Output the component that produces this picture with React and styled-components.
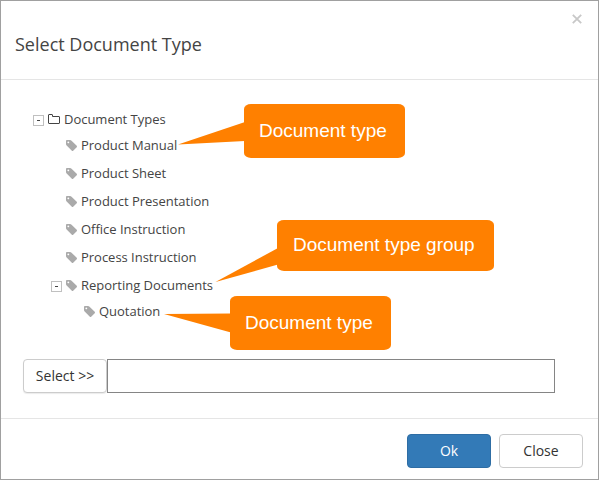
import React from "react";
import styled, { createGlobalStyle } from "styled-components";

const Global = createGlobalStyle`
  body { margin: 0; background: #fff; }
  *, *::before, *::after { box-sizing: border-box; }
`;

const Dialog = styled.section`
  position: relative;
  display: flex;
  flex-direction: column;
  width: 599px;
  height: 480px;
  overflow: hidden;
  border: 1px solid #a0a0a0;
  background: #fff;
  color: #444;
  font-family: "Open Sans", sans-serif;
`;

const Header = styled.header`
  display: flex;
  justify-content: space-between;
  height: 79px;
  flex: none;
  padding: 12px 15px 0 14px;
  border-bottom: 1px solid #e5e5e5;
`;

const Title = styled.h1`
  margin: 18px 0 0;
  font-size: 18px;
  font-weight: 400;
  line-height: 26px;
  white-space: nowrap;
`;

const Dismiss = styled.button`
  display: flex;
  width: 12px;
  height: 12px;
  padding: 1px;
  border: 0;
  background: none;
  color: #c8c8c8;
`;

const Body = styled.main`
  display: flex;
  flex-direction: column;
  justify-content: space-between;
  height: 339px;
  flex: none;
  padding: 25px 22px 25px;
  border-bottom: 1px solid #e5e5e5;
`;

const Tree = styled.ul`
  margin: 0;
  padding: 0 0 0 10px;
  list-style: none;
`;

const Row = styled.li`
  display: flex;
  align-items: center;
  height: ${(p) => p.$height}px;
  padding-left: ${(p) => p.$indent}px;
  font-size: 13px;
  line-height: 18px;
  letter-spacing: -0.02px;
  white-space: nowrap;
`;

const Toggle = styled.span`
  display: flex;
  align-items: center;
  justify-content: center;
  width: 11px;
  height: 11px;
  margin: 2px 4px 0 0;
  border: 1px solid #c0c0c0;
  &::before {
    content: "";
    width: 3px;
    height: 1px;
    background: #444;
  }
`;

const Icon = styled.svg`
  display: block;
  flex: none;
  width: ${(p) => p.$w}px;
  height: ${(p) => p.$h}px;
  margin-right: ${(p) => p.$gap || 0}px;
`;

const Picker = styled.div`
  display: flex;
  height: 34px;
`;

const Button = styled.button`
  width: ${(p) => p.$width}px;
  height: 34px;
  padding: 0;
  border: 1px solid ${(p) => (p.$primary ? "#2e6da4" : "#ccc")};
  border-radius: 4px;
  background: ${(p) => (p.$primary ? "#337ab7" : "#fff")};
  box-shadow: ${(p) => (p.$shadow ? "0 1px 1px rgba(0,0,0,.08)" : "none")};
  color: ${(p) => (p.$primary ? "#fff" : "#333")};
  font: 400 14px/20px "Open Sans", sans-serif;
`;

const Field = styled.input`
  width: 448px;
  height: 34px;
  padding: 0 8px;
  border: 1px solid #858585;
  border-radius: 0;
  background: #fff;
  font: 14px "Open Sans", sans-serif;
`;

const Footer = styled.footer`
  display: flex;
  justify-content: flex-end;
  gap: 8px;
  padding: 15px 15px 0;
`;

const Callout = styled.div`
  position: absolute;
  left: ${(p) => p.$x}px;
  top: ${(p) => p.$y}px;
  display: flex;
  align-items: center;
  width: ${(p) => p.$w}px;
  height: ${(p) => p.$h}px;
  padding: 0 0 ${(p) => p.$lift || 0}px ${(p) => p.$pad || 15}px;
  border-radius: 7px / 5px;
  background: #ff8000;
  color: #fff;
  font: 19px/22px "Liberation Sans", Arial, sans-serif;
  white-space: nowrap;
`;

const Tail = styled.svg`
  position: absolute;
  right: calc(100% - 1px);
  top: 0;
  height: 100%;
  width: 70px;
  overflow: visible;
`;

const Tag = () => (
  <Icon $w={11} $h={11} $gap={4} viewBox="0 128 1515 1515" fill="#aaa">
    <path d="M448 448q0-53-37.5-90.5T320 320t-90.5 37.5T192 448t37.5 90.5T320 576t90.5-37.5T448 448zm1067 576q0 53-37 90l-491 492q-39 37-91 37-53 0-90-37L91 890q-38-37-64.5-101T0 672V256q0-52 38-90t90-38h416q53 0 117 26.5T763 219l715 714q37 39 37 91z" />
  </Icon>
);

const Folder = () => (
  <Icon $w={12} $h={11} $gap={4} viewBox="0 0 12 11" fill="none" stroke="#444">
    <path d="M.5 1Q.5.5 1 .5H4Q4.5 .5 4.5 1V2.5H11Q11.5 2.5 11.5 3V9Q11.5 9.5 11 9.5H1Q.5 9.5 .5 9Z" />
  </Icon>
);

const rows = [
  { label: "Document Types", height: 28, indent: 0, toggle: true, folder: true },
  { label: "Product Manual", height: 24, indent: 33 },
  { label: "Product Sheet", height: 32, indent: 33 },
  { label: "Product Presentation", height: 24, indent: 33 },
  { label: "Office Instruction", height: 32, indent: 33 },
  { label: "Process Instruction", height: 24, indent: 33 },
  { label: "Reporting Documents", height: 32, indent: 18, toggle: true },
  { label: "Quotation", height: 20, indent: 51 },
];

const callouts = [
  { text: "Document type", x: 243, y: 103, w: 161, h: 54, tail: "70,18 3,40.5 70,37" },
  { text: "Document type group", x: 276, y: 219, w: 217, h: 51, pad: 16, lift: 2, tail: "70,28 7.5,62 70,44.5" },
  { text: "Document type", x: 229, y: 295, w: 161, h: 54, tail: "70,17.5 3,18 70,36.5" },
];

export default function App() {
  return (
    <>
      <Global />
      <Dialog role="dialog" aria-label="Select Document Type">
        <Header>
          <Title>Select Document Type</Title>
          <Dismiss aria-label="Dismiss">
            <Icon $w={10} $h={10} viewBox="0 0 10 10" stroke="currentColor" strokeWidth="1.8">
              <path d="M.8.8 9.2 9.2M9.2.8.8 9.2" />
            </Icon>
          </Dismiss>
        </Header>
        <Body>
          <Tree>
            {rows.map((r) => (
              <Row key={r.label} $height={r.height} $indent={r.indent}>
                {r.toggle && <Toggle />}
                {r.folder ? <Folder /> : <Tag />}
                {r.label}
              </Row>
            ))}
          </Tree>
          <Picker>
            <Button $width={84} $shadow>Select &gt;&gt;</Button>
            <Field aria-label="Document type" />
          </Picker>
        </Body>
        <Footer>
          <Button $width={84} $primary>Ok</Button>
          <Button $width={84}>Close</Button>
        </Footer>
        {callouts.map((c) => (
          <Callout key={c.y} $x={c.x} $y={c.y} $w={c.w} $h={c.h} $pad={c.pad} $lift={c.lift}>
            <Tail fill="#ff8000">
              <polygon points={c.tail} />
            </Tail>
            {c.text}
          </Callout>
        ))}
      </Dialog>
    </>
  );
}
